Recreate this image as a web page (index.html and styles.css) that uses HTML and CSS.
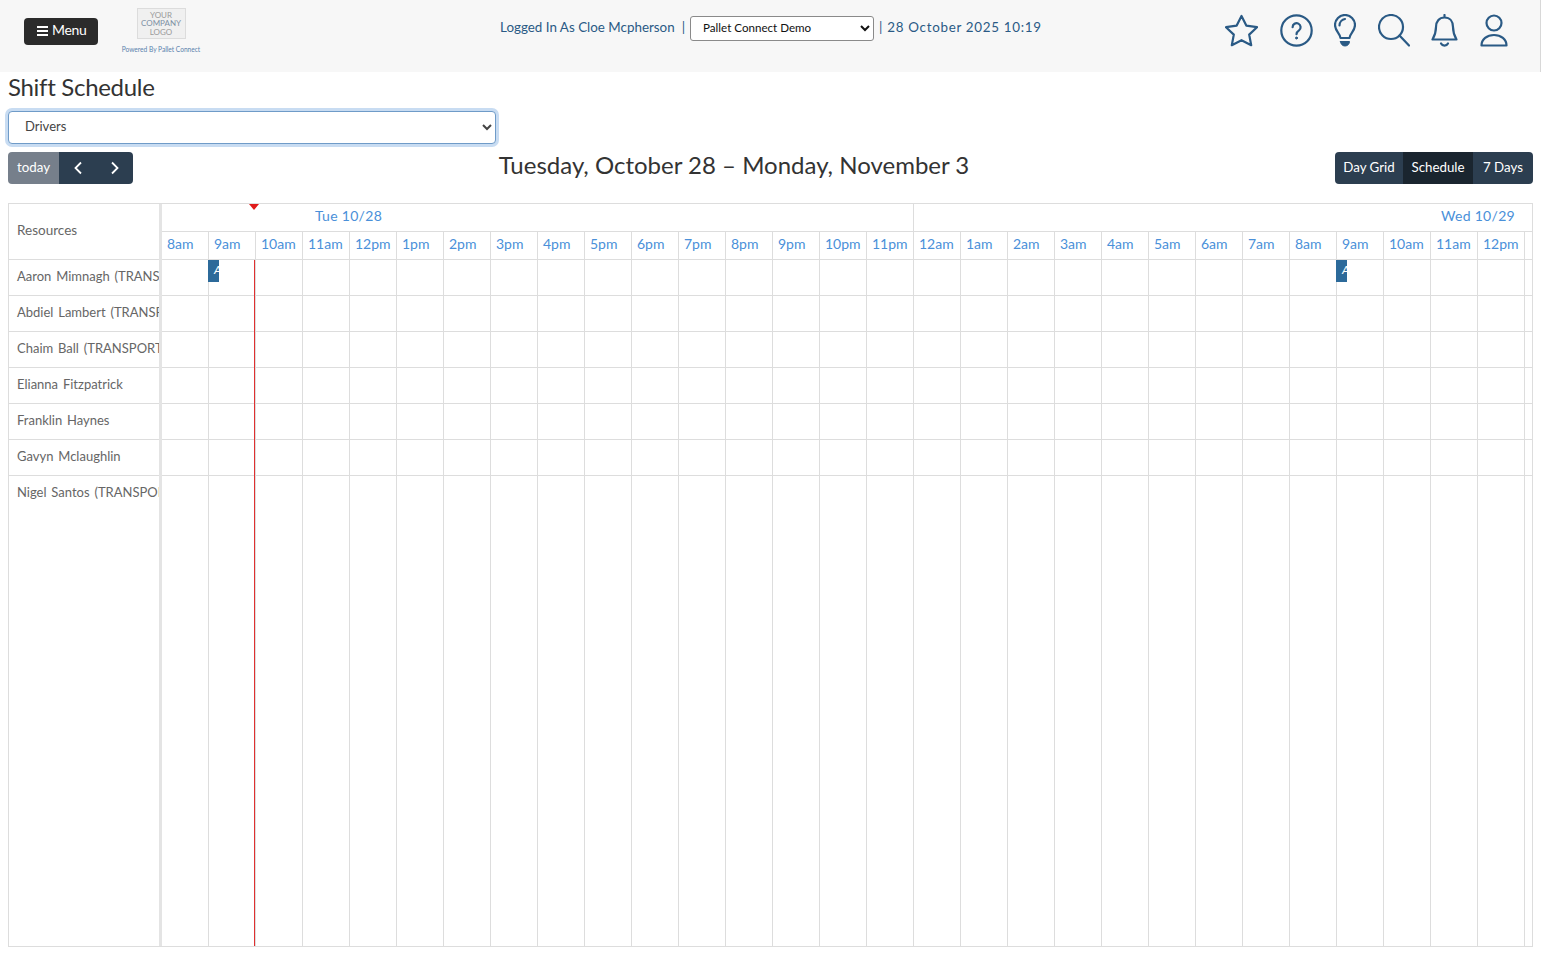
FILE: index.html
```html
<!DOCTYPE html>
<html lang="en">
<head>
    <meta charset="UTF-8">
    <meta name="viewport" content="width=device-width, initial-scale=1.0">
    <title>Shift Schedule</title>
    <link rel="stylesheet" href="styles.css">
</head>
<body>
    <header class="topbar">
        <button class="menu-btn"><span class="burger"><i></i><i></i><i></i></span>Menu</button>
        <div class="brand">
            <div class="logo"><span>YOUR</span><span class="logo-mid">COMPANY</span><span>LOGO</span></div>
            <p class="powered">Powered By Pallet Connect</p>
        </div>
        <div class="session">
            <span class="user">Logged In As Cloe Mcpherson</span>
            <span>|</span>
            <select class="site-select"><option>Pallet Connect Demo</option></select>
            <span class="clock">| 28 October 2025 10:19</span>
        </div>
        <nav class="icons">
            <svg width="33" height="33" viewBox="0 0 33 33"><path d="M16.5 2 21.3 11.6 32 13.2 24.2 20.6 26.2 31.2 16.5 26.2 6.8 31.2 8.8 20.6 1 13.2 11.7 11.6Z"/></svg>
            <svg width="33" height="33" viewBox="0 0 33 33"><circle cx="16.5" cy="16.5" r="15.2"/><path d="M12.6 13.2a4 4 0 1 1 6.4 3.2c-1.6 1.1-2.5 2-2.5 3.8"/><circle class="solid" cx="16.5" cy="24" r="1"/></svg>
            <svg width="22" height="33" viewBox="0 0 22 33"><path d="M6.5 24C6 19.5 1 17 1 11A10 10 0 0 1 21 11C21 17 16 19.5 15.5 24Z"/><path d="M5.5 11.5C5.5 8 8 5.5 11 5"/><path class="solid" d="M6.5 27.5h9c0 2.5-2 4.5-4.500 4.500s-4.500-2-4.500-4.500Z"/></svg>
            <svg width="32" height="33" viewBox="0 0 32 33"><circle cx="13" cy="13" r="12"/><path d="M21.500 21.500 31 31.500"/></svg>
            <svg width="27" height="33" viewBox="0 0 27 33"><path d="M13.500 1v2.500M13.500 3.500C8 3.500 5 7.500 5 13C5 19 3.500 22 1.500 25.500H25.500C23.500 22 22 19 22 13C22 7.500 19 3.500 13.500 3.500Z"/><path d="M10 29.500a4 4 0 0 0 7 0"/></svg>
            <svg width="28" height="33" viewBox="0 0 28 33"><circle cx="14" cy="9" r="7.500"/><path d="M1.500 31.500C1.500 25 7 21 14 21S26.500 25 26.500 31.500Z"/></svg>
        </nav>
    </header>

    <main class="page">
        <h1>Shift Schedule</h1>
        <select class="group-select"><option>Drivers</option></select>

        <div class="toolbar">
            <div class="btn-group">
                <button class="btn btn-muted">today</button>
                <button class="btn btn-arrow"><svg width="10" height="14" viewBox="0 0 10 14"><path d="M8 1.500 2.500 7 8 12.500"/></svg></button>
                <button class="btn btn-arrow"><svg width="10" height="14" viewBox="0 0 10 14"><path d="M2 1.500 7.500 7 2 12.500"/></svg></button>
            </div>
            <h2>Tuesday, October 28 – Monday, November 3</h2>
            <div class="btn-group">
                <button class="btn btn-day">Day Grid</button>
                <button class="btn btn-active">Schedule</button>
                <button class="btn btn-week">7 Days</button>
            </div>
        </div>

        <section class="calendar">
            <div class="resources">
                <div class="resources-head">Resources</div>
                <div class="res-row">Aaron Mimnagh (TRANSPORT)</div>
                <div class="res-row">Abdiel Lambert (TRANSPORT)</div>
                <div class="res-row">Chaim Ball (TRANSPORT)</div>
                <div class="res-row">Elianna Fitzpatrick</div>
                <div class="res-row">Franklin Haynes</div>
                <div class="res-row">Gavyn Mclaughlin</div>
                <div class="res-row">Nigel Santos (TRANSPORT)</div>
            </div>
            <div class="timeline">
                <div class="days">
                    <div class="day day-tue">Tue 10/28</div>
                    <div class="day day-wed">Wed 10/29</div>
                </div>
                <div class="hours">
                    <span>8am</span><span>9am</span><span>10am</span><span>11am</span><span>12pm</span><span>1pm</span><span>2pm</span><span>3pm</span><span>4pm</span><span>5pm</span><span>6pm</span><span>7pm</span><span>8pm</span><span>9pm</span><span>10pm</span><span>11pm</span><span>12am</span><span>1am</span><span>2am</span><span>3am</span><span>4am</span><span>5am</span><span>6am</span><span>7am</span><span>8am</span><span>9am</span><span>10am</span><span>11am</span><span>12pm</span><span></span>
                </div>
                <div class="lanes">
                    <div class="lane"></div>
                    <div class="lane"></div>
                    <div class="lane"></div>
                    <div class="lane"></div>
                    <div class="lane"></div>
                    <div class="lane"></div>
                    <div class="event event-one">A</div>
                    <div class="event event-two">A</div>
                </div>
                <div class="now-arrow"></div>
                <div class="now-line"></div>
            </div>
        </section>
    </main>
</body>
</html>
```

FILE: styles.css
```css
* {
  margin: 0;
  padding: 0;
  box-sizing: border-box;
}

body {
  font-family: "Lato", "Open Sans", sans-serif;
  background-color: #fff;
  color: #333;
  height: 958px;
  overflow: hidden;
}

/* Top bar */
.topbar {
  display: flex;
  align-items: flex-start;
  height: 72px;
  padding: 14px 32px 0 24px;
  background-color: #f7f7f7;
  border-right: 1px solid #d8d8d8;
}

.menu-btn {
  display: flex;
  align-items: center;
  gap: 4px;
  width: 74px;
  height: 27px;
  margin-top: 4px;
  padding: 0 0 4px 13px;
  font: inherit;
  font-size: 14px;
  letter-spacing: -0.3px;
  color: #fff;
  background-color: #2b2b2b;
  border: none;
  border-radius: 4px;
}

.burger {
  display: flex;
  flex-direction: column;
  gap: 2px;
  width: 11px;
  margin-top: 3px;
}

.burger i {
  display: block;
  height: 2px;
  background-color: #fff;
}

.brand {
  display: flex;
  flex-direction: column;
  align-items: center;
  width: 90px;
  margin: -6px 0 0 18px;
}

.logo {
  display: flex;
  flex-direction: column;
  align-items: center;
  justify-content: center;
  width: 49px;
  height: 31px;
  font-size: 8px;
  line-height: 8.500px;
  color: #9a9a9a;
  background-color: #f0f0f0;
  border: 1px solid #dcdcdc;
}

.logo-mid {
  color: #7d8fa3;
}

.powered {
  margin-top: 6px;
  font-size: 6.600px;
  color: #5a82ad;
  white-space: nowrap;
}

.session {
  display: flex;
  align-items: center;
  gap: 5px;
  height: 25px;
  margin: 2px 0 0 294px;
  font-size: 13.400px;
  color: #2a5a85;
  white-space: nowrap;
}

.session span {
  padding-bottom: 4px;
}

.user {
  margin-right: 2px;
}

.clock {
  letter-spacing: 0.700px;
}

.site-select {
  width: 184px;
  height: 25px;
  padding: 0 0 2px 8px;
  font: inherit;
  font-size: 11.600px;
  color: #111;
  background-color: #fff;
  border: 1px solid #8a8a8a;
  border-radius: 3px;
}

.icons {
  display: flex;
  gap: 21.600px;
  margin-left: auto;
}

.icons svg {
  fill: none;
  stroke: #2a5a85;
  stroke-width: 2.200;
  stroke-linejoin: round;
  stroke-linecap: round;
}

.icons .solid {
  fill: #2a5a85;
  stroke-width: 1;
}

/* Page */
.page {
  padding: 0 8px;
}

h1 {
  height: 38px;
  font-size: 24px;
  letter-spacing: -0.3px;
  line-height: 29px;
  font-weight: 400;
  color: #333;
}

.group-select {
  display: block;
  width: 488px;
  height: 33px;
  margin-top: 1px;
  padding: 0 0 3px 12px;
  font: inherit;
  font-size: 13px;
  color: #444;
  background-color: #fff;
  border: 1px solid #6f9bc8;
  border-radius: 4px;
  box-shadow: 0 0 0 3px #c8dcf2;
}

.toolbar {
  display: flex;
  align-items: center;
  justify-content: space-between;
  height: 32px;
  margin-top: 8px;
}

h2 {
  margin-bottom: 7px;
  font-size: 24px;
  font-weight: 400;
  color: #333;
}

.btn-group {
  display: flex;
  height: 32px;
  border-radius: 4px;
  overflow: hidden;
}

.btn {
  width: 70px;
  padding: 0 0 3px;
  font: inherit;
  font-size: 13.300px;
  color: #fff;
  background-color: #2c3e50;
  border: none;
}

.btn-day {
  width: 68px;
}

.btn-week {
  width: 60px;
}

.btn-muted {
  width: 51px;
  background-color: #767f8b;
}

.btn-arrow {
  width: 37px;
}

.btn-arrow svg {
  display: block;
  margin: 2px auto 0;
  fill: none;
  stroke: #fff;
  stroke-width: 1.800;
}

.btn-active {
  background-color: #1a252f;
}

/* Calendar */
.calendar {
  display: flex;
  height: 744px;
  margin-top: 19px;
  border: 1px solid #ddd;
  font-size: 14px;
}

.resources {
  flex: 0 0 153px;
  border-right: 3px solid #e4e4e4;
  overflow: hidden;
}

.resources-head {
  display: flex;
  align-items: center;
  height: 56px;
  padding: 0 0 3px 8px;
  font-size: 13.500px;
  color: #666;
  border-bottom: 1px solid #ddd;
}

.res-row {
  height: 36px;
  padding: 7px 0 0 8px;
  font-size: 13px;
  word-spacing: 1.500px;
  line-height: 18px;
  color: #666;
  white-space: nowrap;
  border-bottom: 1px solid #ddd;
}

.res-row:last-child {
  border-bottom: none;
}

.timeline {
  position: relative;
  flex: 1;
  overflow: hidden;
  color: #4a90d9;
}

.days {
  display: flex;
  height: 28px;
  border-bottom: 1px solid #ddd;
}

.day {
  flex: 0 0 752px;
  line-height: 23px;
  letter-spacing: 0.3px;
}

.day-tue {
  padding-left: 153px;
  border-right: 1px solid #ddd;
}

.day-wed {
  flex-basis: 620px;
  padding-right: 19px;
  text-align: right;
}

.hours {
  display: flex;
  height: 28px;
  border-bottom: 1px solid #ddd;
}

.hours span {
  flex: 0 0 47px;
  padding-left: 5px;
  line-height: 24px;
  border-right: 1px solid #ddd;
}

/* vertical slot lines run down the whole body */
.lanes {
  position: relative;
  height: 687px;
  background-image: linear-gradient(to right, transparent 46px, #ddd 46px);
  background-size: 47px 100%;
}

.lane {
  height: 36px;
  border-bottom: 1px solid #ddd;
}

.event {
  position: absolute;
  top: 0;
  width: 11px;
  height: 22px;
  padding-left: 6px;
  overflow: hidden;
  font-size: 12px;
  font-style: italic;
  line-height: 20px;
  color: #fff;
  background-color: #2c6a9a;
}

.event-one {
  left: 46px;
}

.event-two {
  left: 1174px;
}

.now-line {
  position: absolute;
  top: 56px;
  bottom: 0;
  left: 92px;
  width: 1px;
  background-color: #e03030;
}

.now-arrow {
  position: absolute;
  top: 0;
  left: 87px;
  border-style: solid;
  border-width: 6px 5px 0;
  border-color: #e01b1b transparent transparent;
}
```
